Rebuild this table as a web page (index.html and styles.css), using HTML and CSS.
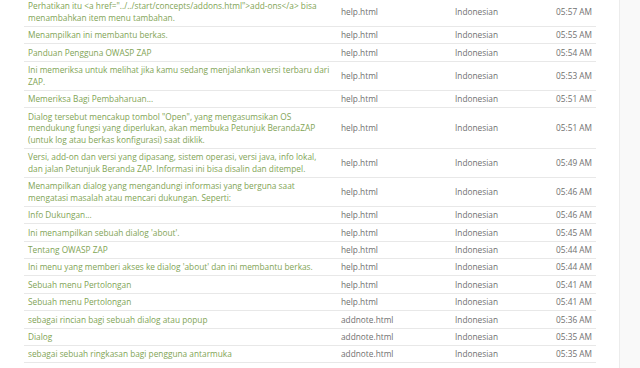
FILE: index.html
```html
<!DOCTYPE html>
<html lang="id">
<head>
<meta charset="utf-8">
<title>Terjemahan</title>
<link rel="stylesheet" href="styles.css">
</head>
<body>
<div class="layout">
  <main class="main">
    <table class="list">
      <colgroup>
        <col class="c-text"><col class="c-file"><col class="c-lang"><col class="c-time">
      </colgroup>
      <tbody>
        <tr><td class="src">Perhatikan itu &lt;a href="../../start/concepts/addons.html"&gt;add-ons&lt;/a&gt; bisa menambahkan item menu tambahan.</td><td>help.html</td><td>Indonesian</td><td class="time">05:57 AM</td></tr>
        <tr><td class="src">Menampilkan ini membantu berkas.</td><td>help.html</td><td>Indonesian</td><td class="time">05:55 AM</td></tr>
        <tr><td class="src">Panduan Pengguna OWASP ZAP</td><td>help.html</td><td>Indonesian</td><td class="time">05:54 AM</td></tr>
        <tr><td class="src">Ini memeriksa untuk melihat jika kamu sedang menjalankan versi terbaru dari ZAP.</td><td>help.html</td><td>Indonesian</td><td class="time">05:53 AM</td></tr>
        <tr><td class="src">Memeriksa Bagi Pembaharuan...</td><td>help.html</td><td>Indonesian</td><td class="time">05:51 AM</td></tr>
        <tr><td class="src">Dialog tersebut mencakup tombol "Open", yang mengasumsikan OS mendukung fungsi yang diperlukan, akan membuka Petunjuk BerandaZAP (untuk log atau berkas konfigurasi) saat diklik.</td><td>help.html</td><td>Indonesian</td><td class="time">05:51 AM</td></tr>
        <tr><td class="src">Versi, add-on dan versi yang dipasang, sistem operasi, versi java, info lokal, dan jalan Petunjuk Beranda ZAP. Informasi ini bisa disalin dan ditempel.</td><td>help.html</td><td>Indonesian</td><td class="time">05:49 AM</td></tr>
        <tr><td class="src">Menampilkan dialog yang mengandungi informasi yang berguna saat mengatasi masalah atau mencari dukungan. Seperti:</td><td>help.html</td><td>Indonesian</td><td class="time">05:46 AM</td></tr>
        <tr><td class="src">Info Dukungan...</td><td>help.html</td><td>Indonesian</td><td class="time">05:46 AM</td></tr>
        <tr><td class="src">Ini menampilkan sebuah dialog 'about'.</td><td>help.html</td><td>Indonesian</td><td class="time">05:45 AM</td></tr>
        <tr><td class="src">Tentang OWASP ZAP</td><td>help.html</td><td>Indonesian</td><td class="time">05:44 AM</td></tr>
        <tr><td class="src">Ini menu yang memberi akses ke dialog 'about' dan ini membantu berkas.</td><td>help.html</td><td>Indonesian</td><td class="time">05:44 AM</td></tr>
        <tr><td class="src">Sebuah menu Pertolongan</td><td>help.html</td><td>Indonesian</td><td class="time">05:41 AM</td></tr>
        <tr><td class="src">Sebuah menu Pertolongan</td><td>help.html</td><td>Indonesian</td><td class="time">05:41 AM</td></tr>
        <tr><td class="src">sebagai rincian bagi sebuah dialog atau popup</td><td>addnote.html</td><td>Indonesian</td><td class="time">05:36 AM</td></tr>
        <tr><td class="src">Dialog</td><td>addnote.html</td><td>Indonesian</td><td class="time">05:35 AM</td></tr>
        <tr><td class="src">sebagai sebuah ringkasan bagi pengguna antarmuka</td><td>addnote.html</td><td>Indonesian</td><td class="time">05:35 AM</td></tr>
      </tbody>
    </table>
  </main>
  <aside class="side"></aside>
</div>
</body>
</html>
```

FILE: styles.css
```css
html, body {
  margin: 0;
  padding: 0;
  background: #ffffff;
}
body {
  font-family: "Open Sans", "Liberation Sans", sans-serif;
  font-size: 8.3px;
  line-height: 1.4;
  color: #707070;
  overflow: hidden;
}
.layout {
  display: flex;
  height: 368px;
}
.main {
  width: 595px;
  padding-left: 24px;
  border-right: 1px solid #ececec;
  background: #ffffff;
}
.side {
  flex: 1;
  background: #f9f9f9;
}
.list {
  width: 572px;
  margin-top: -2px;
  border-collapse: collapse;
  table-layout: fixed;
}
.c-text { width: 313px; }
.c-file { width: 114px; }
.c-lang { width: 94px; }
.c-time { width: 51px; }
.list td {
  padding: 2.4px 4px;
  border-bottom: 1px solid #e8e8e8;
  vertical-align: middle;
}
.list td.src {
  color: #7fa455;
}
.list td.time {
  text-align: right;
  white-space: nowrap;
}
```
